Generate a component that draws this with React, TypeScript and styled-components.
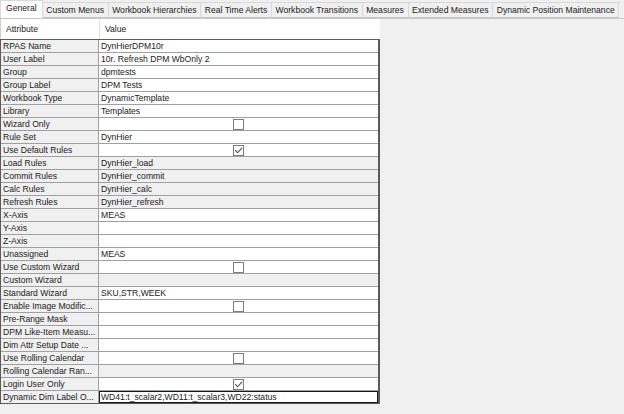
import styled, { createGlobalStyle } from "styled-components";

type Row = {
  attr: string;
  value?: string;
  check?: boolean;
  locked?: boolean;
  editing?: boolean;
};

const tabs = [
  "General",
  "Custom Menus",
  "Workbook Hierarchies",
  "Real Time Alerts",
  "Workbook Transitions",
  "Measures",
  "Extended Measures",
  "Dynamic Position Maintenance",
];

const rows: Row[] = [
  { attr: "RPAS Name", value: "DynHierDPM10r" },
  { attr: "User Label", value: "10r. Refresh DPM WbOnly 2" },
  { attr: "Group", value: "dpmtests" },
  { attr: "Group Label", value: "DPM Tests" },
  { attr: "Workbook Type", value: "DynamicTemplate" },
  { attr: "Library", value: "Templates" },
  { attr: "Wizard Only", check: false },
  { attr: "Rule Set", value: "DynHier" },
  { attr: "Use Default Rules", check: true },
  { attr: "Load Rules", value: "DynHier_load", locked: true },
  { attr: "Commit Rules", value: "DynHier_commit", locked: true },
  { attr: "Calc Rules", value: "DynHier_calc", locked: true },
  { attr: "Refresh Rules", value: "DynHier_refresh", locked: true },
  { attr: "X-Axis", value: "MEAS" },
  { attr: "Y-Axis", value: "" },
  { attr: "Z-Axis", value: "" },
  { attr: "Unassigned", value: "MEAS" },
  { attr: "Use Custom Wizard", check: false },
  { attr: "Custom Wizard", value: "", locked: true },
  { attr: "Standard Wizard", value: "SKU,STR,WEEK" },
  { attr: "Enable Image Modific...", check: false },
  { attr: "Pre-Range Mask", value: "" },
  { attr: "DPM Like-Item Measu...", value: "" },
  { attr: "Dim Attr Setup Date ...", value: "" },
  { attr: "Use Rolling Calendar", check: false },
  { attr: "Rolling Calendar Ran...", value: "", locked: true },
  { attr: "Login User Only", check: true },
  {
    attr: "Dynamic Dim Label O...",
    value: "WD41:t_scalar2,WD11:t_scalar3,WD22:status",
    editing: true,
  },
];

export default function App() {
  return (
    <>
      <GlobalStyle />
      <Window>
        <TabStrip>
          {tabs.map((t, i) => (
            <Tab key={t} $active={i === 0}>
              {t}
            </Tab>
          ))}
        </TabStrip>
        <Panel>
          <Grid>
            <HeaderRow>
              <HeaderCell>Attribute</HeaderCell>
              <HeaderCell $last>Value</HeaderCell>
            </HeaderRow>
            <Body>
              {rows.map((r) => (
                <DataRow key={r.attr}>
                  <AttrCell>{r.attr}</AttrCell>
                  <ValueCell $locked={r.locked} $editing={r.editing}>
                    {r.check !== undefined ? (
                      <CheckBox>
                        {r.check && (
                          <svg width="9" height="9" viewBox="0 0 9 9">
                            <polyline
                              points="1.2,4.2 3.6,6.8 8,1.8"
                              fill="none"
                              stroke="#4a4a4a"
                              strokeWidth="1.1"
                            />
                          </svg>
                        )}
                      </CheckBox>
                    ) : (
                      r.value
                    )}
                  </ValueCell>
                </DataRow>
              ))}
            </Body>
          </Grid>
        </Panel>
      </Window>
    </>
  );
}

const GlobalStyle = createGlobalStyle`
  html, body {
    margin: 0;
    padding: 0;
    background: #f0f0f0;
  }
  body {
    font-family: "Liberation Sans", Arial, sans-serif;
    font-size: 8.6px;
    color: #1a1a1a;
  }
`;

const Window = styled.div`
  width: 624px;
  height: 414px;
  background: #f0f0f0;
  display: flex;
  flex-direction: column;
`;

const TabStrip = styled.div`
  display: flex;
  align-items: flex-end;
  height: 18px;
  padding-left: 0;
`;

const Tab = styled.div<{ $active?: boolean }>`
  box-sizing: border-box;
  height: ${(p) => (p.$active ? "18px" : "16px")};
  line-height: ${(p) => (p.$active ? "15px" : "14px")};
  padding: 0 ${(p) => (p.$active ? "5px" : "3.6px")};
  background: ${(p) => (p.$active ? "#ffffff" : "#f0f0f0")};
  border: 1px solid #d9d9d9;
  border-bottom: ${(p) => (p.$active ? "none" : "1px solid #c8c8c8")};
  margin-right: -1px;
  white-space: nowrap;
  color: #1a1a1a;
  position: relative;
  z-index: ${(p) => (p.$active ? 1 : 0)};
`;

const Panel = styled.div`
  flex: 1;
  border-top: 1px solid #c8c8c8;
  padding-top: 0;
`;

const Grid = styled.div`
  width: 380px;
`;

const HeaderRow = styled.div`
  display: grid;
  grid-template-columns: 99px 1fr;
  height: 20px;
  background: #ffffff;
  border-left: 1px solid #d0d0d0;
  box-sizing: border-box;
`;

const HeaderCell = styled.div<{ $last?: boolean }>`
  padding-left: 5px;
  line-height: 20px;
  border-right: ${(p) => (p.$last ? "none" : "1px solid #e0e0e0")};
`;

const Body = styled.div`
  border: 1px solid #5a5a5a;
  border-width: 1px 2px 1px 1px;
  background: #ffffff;
`;

const DataRow = styled.div`
  display: grid;
  grid-template-columns: 98px 1fr;
  height: 13px;
  box-sizing: border-box;
  border-bottom: 1px solid #a0a0a0;
  &:last-child {
    border-bottom: none;
    height: 12px;
  }
`;

const AttrCell = styled.div`
  background: #f0f0f0;
  border-right: 1px solid #a0a0a0;
  padding-left: 2px;
  line-height: 12px;
  white-space: nowrap;
  overflow: hidden;
`;

const ValueCell = styled.div<{ $locked?: boolean; $editing?: boolean }>`
  display: flex;
  align-items: center;
  padding-left: 2px;
  line-height: 12px;
  white-space: nowrap;
  overflow: hidden;
  background: ${(p) => (p.$locked ? "#f0f0f0" : "#ffffff")};
  box-sizing: border-box;
  ${(p) =>
    p.$editing &&
    `
    border: 1px solid #1a1a1a;
    padding-left: 1px;
  `}
`;

const CheckBox = styled.span`
  box-sizing: border-box;
  width: 11px;
  height: 11px;
  margin-left: 132px;
  border: 1px solid #7d7d7d;
  background: #ffffff;
  display: flex;
  align-items: center;
  justify-content: center;
`;
